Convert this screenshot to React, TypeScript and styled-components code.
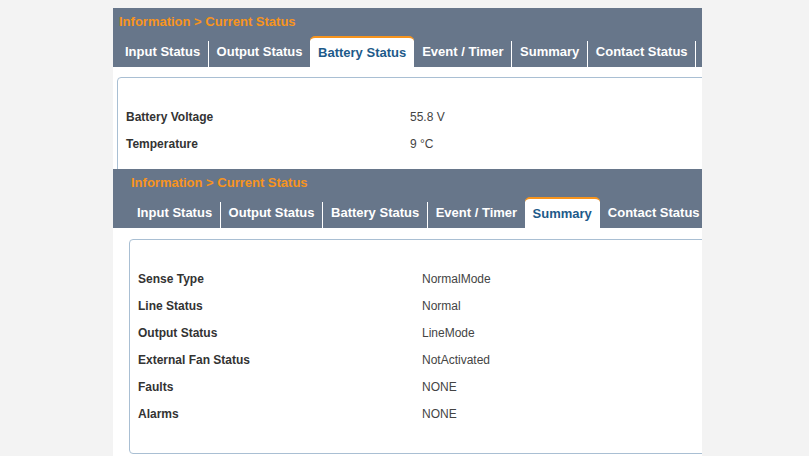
import React from 'react'
import styled, { createGlobalStyle } from 'styled-components'

const GlobalStyle = createGlobalStyle`
  html, body {
    margin: 0;
    padding: 0;
    background: #f3f3f3;
  }
  body {
    padding: 8px 0 0 113px;
    font-family: "Liberation Sans", Arial, sans-serif;
  }
`

const TABS = ['Input Status', 'Output Status', 'Battery Status', 'Event / Timer', 'Summary', 'Contact Status']

type Row = { label: string; value: string }

const batteryRows: Row[] = [
  { label: 'Battery Voltage', value: '55.8 V' },
  { label: 'Temperature', value: '9 °C' },
]

const summaryRows: Row[] = [
  { label: 'Sense Type', value: 'NormalMode' },
  { label: 'Line Status', value: 'Normal' },
  { label: 'Output Status', value: 'LineMode' },
  { label: 'External Fan Status', value: 'NotActivated' },
  { label: 'Faults', value: 'NONE' },
  { label: 'Alarms', value: 'NONE' },
]

type PanelProps = {
  active: number
  rows: Row[]
  indent?: number
  bodyHeight?: number
}

const StatusPanel: React.FC<PanelProps> = ({ active, rows, indent = 0, bodyHeight }) => (
  <Panel>
    <Header $indent={indent}>
      <Breadcrumb>Information &gt; Current Status</Breadcrumb>
      <TabBar>
        {TABS.map((t, i) => (
          <Tab key={t} $active={i === active} $sep={i !== active && i + 1 !== active}>
            {t}
          </Tab>
        ))}
      </TabBar>
    </Header>
    <Body $indent={indent} $height={bodyHeight}>
      <InfoBox>
        {rows.map(r => (
          <InfoRow key={r.label}>
            <Label>{r.label}</Label>
            <Value>{r.value}</Value>
          </InfoRow>
        ))}
      </InfoBox>
    </Body>
  </Panel>
)

const App: React.FC = () => (
  <>
    <GlobalStyle />
    <Page>
      <StatusPanel active={2} rows={batteryRows} bodyHeight={102} />
      <StatusPanel active={4} rows={summaryRows} indent={12} />
    </Page>
  </>
)

export default App

const Page = styled.div`
  width: 589px;
  display: flex;
  flex-direction: column;
`

const Panel = styled.section`
  width: 100%;
  overflow: hidden;
`

const Header = styled.div<{ $indent: number }>`
  background: #67768a;
  padding-left: ${({ $indent }) => 4 + $indent}px;
  height: 59px;
  box-sizing: border-box;
`

const Breadcrumb = styled.div`
  height: 28px;
  box-sizing: border-box;
  padding: 6px 0 0 2px;
  font-size: 13px;
  line-height: 16px;
  font-weight: bold;
  color: #f7941d;
  white-space: nowrap;
`

const TabBar = styled.div`
  display: flex;
  align-items: flex-end;
  height: 31px;
  white-space: nowrap;
`

const Tab = styled.div<{ $active: boolean; $sep: boolean }>`
  flex: none;
  box-sizing: border-box;
  padding: ${({ $active }) => ($active ? '7px 8px 0' : '3px 7.5px 0 8px')};
  height: ${({ $active }) => ($active ? 31 : 26)}px;
  font-size: 13px;
  line-height: 16px;
  font-weight: bold;
  color: ${({ $active }) => ($active ? '#1d5a8a' : '#ffffff')};
  background: ${({ $active }) => ($active ? '#ffffff' : 'transparent')};
  border-top: ${({ $active }) => ($active ? '2px solid #f7941d' : 'none')};
  border-radius: ${({ $active }) => ($active ? '5px 5px 0 0' : '0')};
  border-right: ${({ $sep }) => ($sep ? '1px solid #ffffff' : 'none')};
`

const Body = styled.div<{ $indent: number; $height?: number }>`
  background: #ffffff;
  padding: ${({ $indent }) => ($indent ? 11 : 10)}px 0 2px ${({ $indent }) => 4 + $indent}px;
  ${({ $height }) => ($height ? `height: ${$height}px; box-sizing: border-box;` : '')}
  overflow: hidden;
`

const InfoBox = styled.div`
  border: 1px solid #a9bfd3;
  border-radius: 4px;
  margin-right: -12px;
  padding: 25px 0 26px 8px;
`

const InfoRow = styled.div`
  display: grid;
  grid-template-columns: 284px 1fr;
  align-items: center;
  height: 27px;
  font-size: 12px;
`

const Label = styled.span`
  font-weight: bold;
  color: #333333;
`

const Value = styled.span`
  color: #444444;
`
